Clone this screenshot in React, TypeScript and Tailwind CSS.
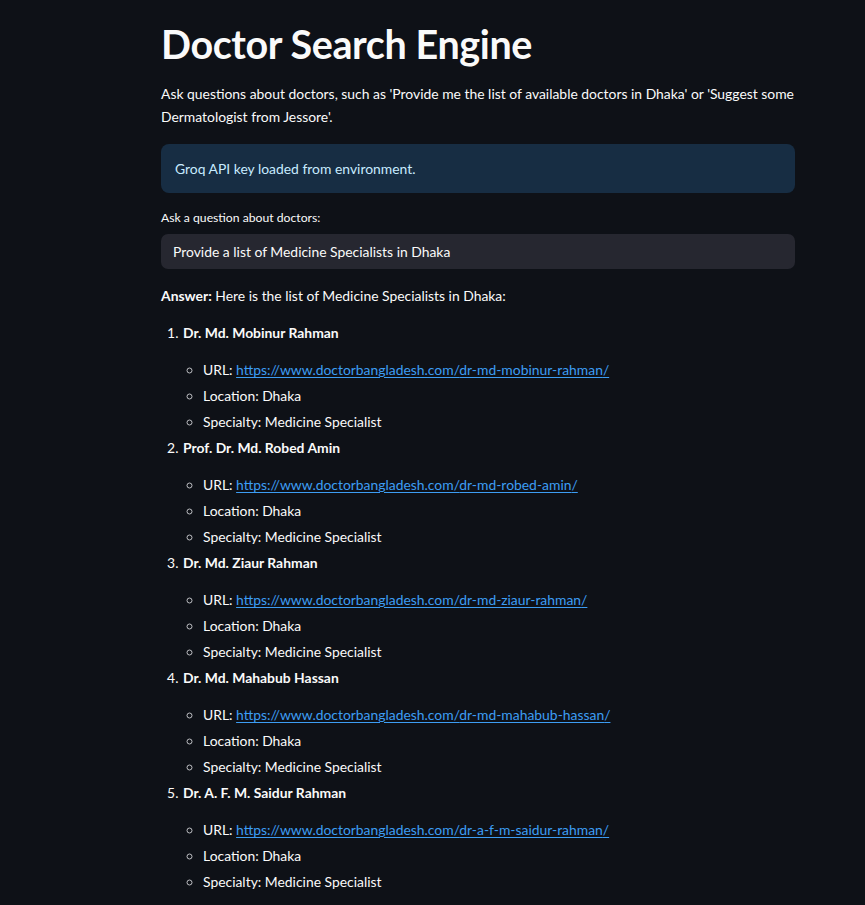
const doctors = [
  { name: "Dr. Md. Mobinur Rahman", slug: "dr-md-mobinur-rahman" },
  { name: "Prof. Dr. Md. Robed Amin", slug: "dr-md-robed-amin" },
  { name: "Dr. Md. Ziaur Rahman", slug: "dr-md-ziaur-rahman" },
  { name: "Dr. Md. Mahabub Hassan", slug: "dr-md-mahabub-hassan" },
  { name: "Dr. A. F. M. Saidur Rahman", slug: "dr-a-f-m-saidur-rahman" },
];

export default function App() {
  return (
    <div className="min-h-[905px] bg-[#0e1117] text-[#fafafa] font-['Lato','Noto_Sans',sans-serif] text-[13.9px] leading-[23px]">
      <main className="ml-[161px] w-[634px] pt-[20px] pb-10">
        <h1 className="text-[39.5px] font-bold leading-[48px] tracking-[-0.01em]">Doctor Search Engine</h1>
        <p className="mt-[14px]">
          Ask questions about doctors, such as 'Provide me the list of available doctors in Dhaka' or 'Suggest some
          Dermatologist from Jessore'.
        </p>

        <div className="mt-[16px] flex h-[49px] items-center rounded-lg bg-[#172d43] px-[14px] text-[#c7ebff]">
          Groq API key loaded from environment.
        </div>

        <label className="mt-[16px] block text-[12.2px] leading-[18px]">Ask a question about doctors:</label>
        <div className="mt-[7px] flex h-[35px] items-center rounded-[7px] bg-[#262730] px-[12px]">
          Provide a list of Medicine Specialists in Dhaka
        </div>

        <p className="mt-[15px]">
          <strong className="font-bold">Answer:</strong> Here is the list of Medicine Specialists in Dhaka:
        </p>

        <ol className="mt-[14px] list-decimal pl-[21px]">
          {doctors.map((d) => (
            <li key={d.slug} className="mb-[3px] pl-[1px]">
              <strong className="font-bold">{d.name}</strong>
              <ul className="mt-[14px] list-[circle] pl-[20px] marker:text-[#bfc0c4]">
                <li className="mb-[3px]">
                  URL:{" "}
                  <a href="#" className="text-[#3d9df3] underline underline-offset-2">
                    https://www.doctorbangladesh.com/{d.slug}/
                  </a>
                </li>
                <li className="mb-[3px]">Location: Dhaka</li>
                <li>Specialty: Medicine Specialist</li>
              </ul>
            </li>
          ))}
        </ol>
      </main>
    </div>
  );
}
